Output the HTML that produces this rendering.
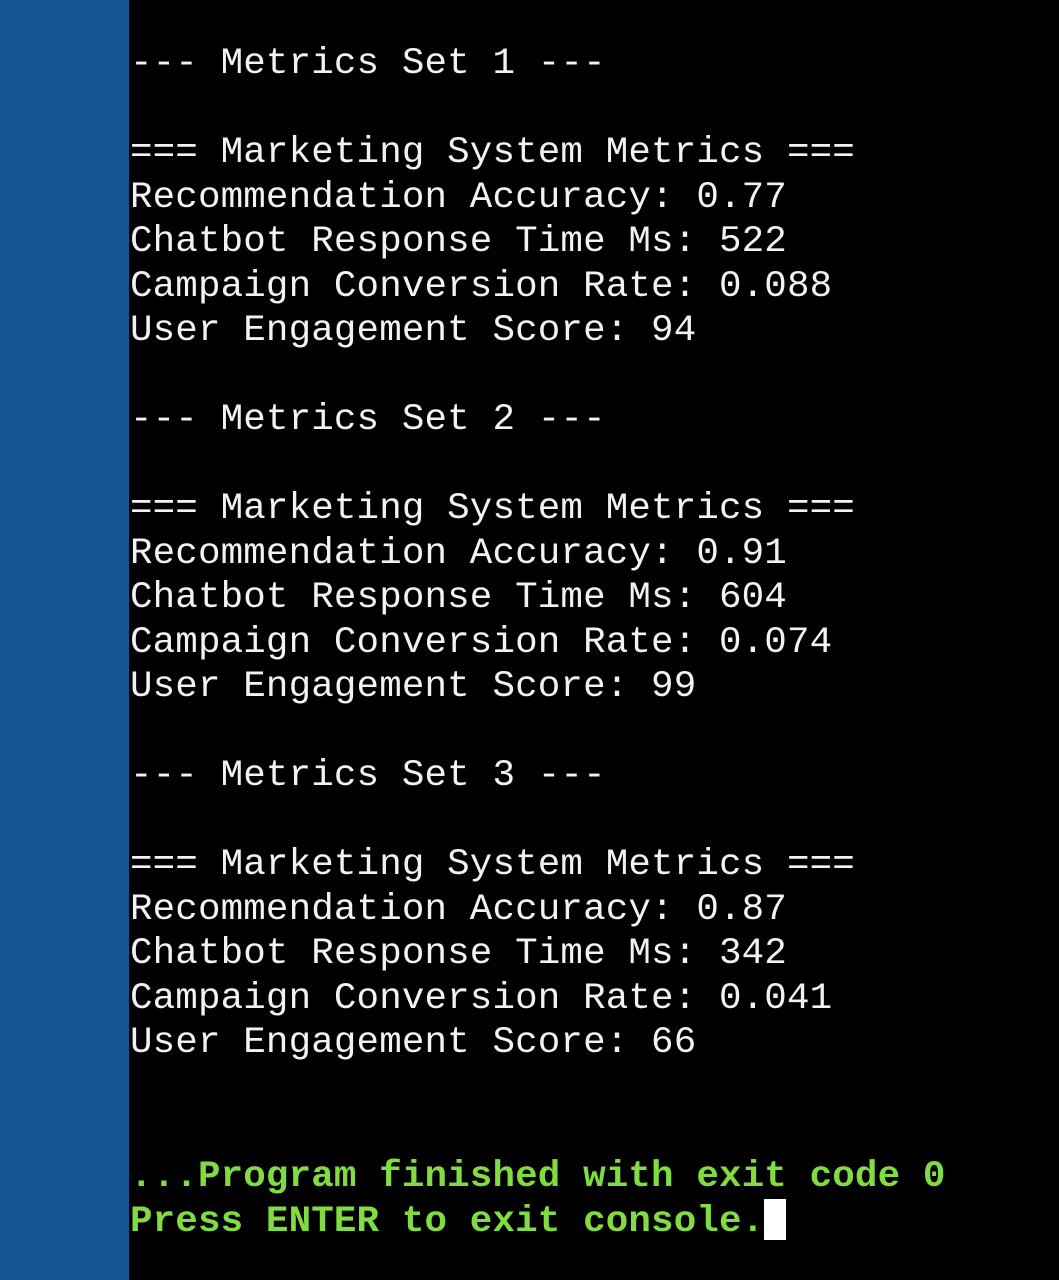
<!DOCTYPE html>
<html><head><style>
html,body{margin:0;padding:0;width:1059px;height:1280px;background:#000;overflow:hidden}
.bar{position:absolute;left:0;top:0;width:129px;height:1280px;background:#145592}
pre{position:absolute;left:130px;top:42px;margin:0;font-family:"Liberation Mono",monospace;font-size:37.5px;line-height:44.5px;color:#f2f2f2;letter-spacing:0.15px}
.g{color:#80dc40;font-weight:bold}
.cur{display:inline-block;width:22px;height:41px;background:#fff;vertical-align:-9px}
</style></head><body>
<div class="bar"></div>
<pre>--- Metrics Set 1 ---

=== Marketing System Metrics ===
Recommendation Accuracy: 0.77
Chatbot Response Time Ms: 522
Campaign Conversion Rate: 0.088
User Engagement Score: 94

--- Metrics Set 2 ---

=== Marketing System Metrics ===
Recommendation Accuracy: 0.91
Chatbot Response Time Ms: 604
Campaign Conversion Rate: 0.074
User Engagement Score: 99

--- Metrics Set 3 ---

=== Marketing System Metrics ===
Recommendation Accuracy: 0.87
Chatbot Response Time Ms: 342
Campaign Conversion Rate: 0.041
User Engagement Score: 66


<span class="g">...Program finished with exit code 0</span>
<span class="g">Press ENTER to exit console.</span><span class="cur"></span></pre>
</body></html>
